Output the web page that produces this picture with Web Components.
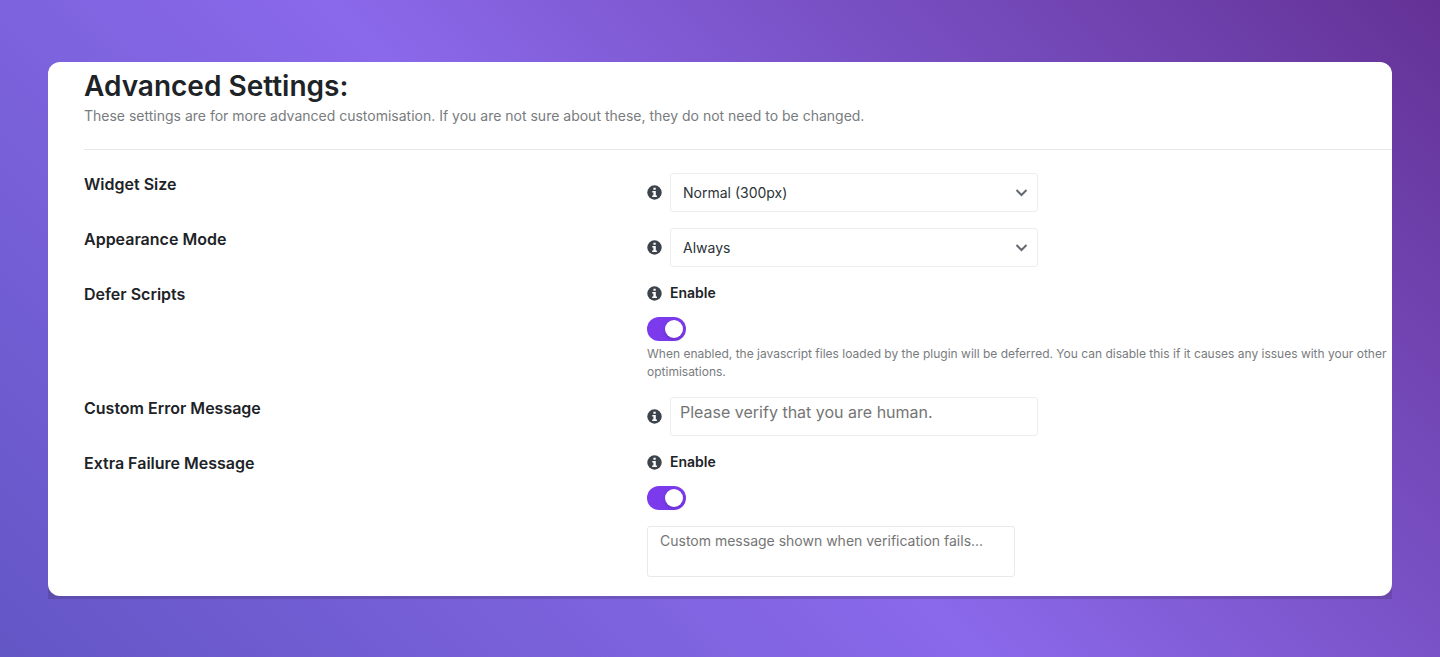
<!DOCTYPE html>
<html lang="en">
<head>
<meta charset="utf-8">
<meta name="viewport" content="width=device-width, initial-scale=1">
<title>Advanced Settings</title>
<style>
  body {
    margin: 0;
    min-height: 100vh;
    box-sizing: border-box;
    padding: 62px 48px 58px;
    font-family: Inter, "Liberation Sans", sans-serif;
    color: #1d2327;
    background: linear-gradient(45deg, #6356c5 0%, #8a69ea 47%, #643296 100%);
  }
</style>
</head>
<body>
<settings-panel heading="Advanced Settings:">
  <span slot="intro">These settings are for more advanced customisation. If you are not sure about these, they do not need to be changed.</span>
  <select-setting label="Widget Size" options="Normal (300px)|Flexible (100%)|Compact (150px)"></select-setting>
  <select-setting label="Appearance Mode" options="Always|Interaction Only"></select-setting>
  <toggle-setting label="Defer Scripts">
    <help-text>When enabled, the javascript files loaded by the plugin will be deferred. You can disable this if it causes any issues with your other optimisations.</help-text>
  </toggle-setting>
  <message-setting label="Custom Error Message" hint="Please verify that you are human."></message-setting>
  <toggle-setting label="Extra Failure Message">
    <message-box hint="Custom message shown when verification fails..." label="Extra failure message text"></message-box>
  </toggle-setting>
</settings-panel>

<script>
class SettingsPanel extends HTMLElement {
  connectedCallback() {
    this.attachShadow({ mode: 'open' }).innerHTML = `
      <style>
        :host { display: block; padding-bottom: 3px; background: linear-gradient(to top, rgba(64, 40, 96, 0.25) 16px, transparent 16px); }
        section { background: #fff; border-radius: 12px; padding: 6px 0 19px 36px; }
        h1 { margin: 0; font-size: 28px; line-height: 36px; font-weight: 600; }
        p { margin: 0; font-size: 14px; line-height: 24px; color: #787c7e; }
        hr { margin: 21px 0 23px; border: 0; border-top: 1px solid #e8e8e9; }
        .rows { display: flex; flex-direction: column; gap: 16px; }
      </style>
      <section>
        <h1></h1>
        <p><slot name="intro"></slot></p>
        <hr>
        <div class="rows"><slot></slot></div>
      </section>`;
    this.shadowRoot.querySelector('h1').textContent = this.getAttribute('heading');
  }
}

class InfoIcon extends HTMLElement {
  connectedCallback() {
    this.attachShadow({ mode: 'open' }).innerHTML = `
      <style>
        :host { display: block; flex: none; width: 15px; height: 15px; color: #3c434a; }
        svg { display: block; width: 100%; height: 100%; }
      </style>
      <svg viewBox="0 0 15 15" aria-hidden="true">
        <circle cx="7.5" cy="7.5" r="7.2" fill="currentColor"/>
        <path fill="#fff" d="M6.4 2.8h2.3v2H6.4zM5.3 6h3.5v4.4h1.1v1.5H5.2v-1.5h1.2V7.5H5.3z"/>
      </svg>`;
  }
}

const ROW_STYLE = `
  :host { display: grid; grid-template-columns: 43fr 57fr; column-gap: 1px; align-items: start; }
  .name { font-size: 16px; line-height: 22px; font-weight: 600; }
  .line { display: flex; align-items: center; gap: 8px; }
  .field { box-sizing: border-box; width: 368px; max-width: 100%; height: 39px; margin: 0;
    border: 1px solid #ededee; border-radius: 3px; background: #fff; color: #2c3338; font-family: inherit; }
`;

class SelectSetting extends HTMLElement {
  connectedCallback() {
    this.attachShadow({ mode: 'open' }).innerHTML = `
      <style>${ROW_STYLE}
        .pick { display: grid; align-items: center; }
        .pick > * { grid-area: 1 / 1; }
        select { appearance: none; padding: 0 32px 0 12px; font-size: 14px; }
        svg { justify-self: end; margin-right: 10px; width: 13px; height: 9px; pointer-events: none; }
      </style>
      <label class="name" for="control"></label>
      <div class="line">
        <info-icon></info-icon>
        <div class="pick">
          <select class="field" id="control"></select>
          <svg viewBox="0 0 13 9" fill="none" stroke="#646970" stroke-width="2" aria-hidden="true"><path d="M1.5 2l5 5 5-5"/></svg>
        </div>
      </div>`;
    this.shadowRoot.querySelector('.name').textContent = this.getAttribute('label');
    const select = this.shadowRoot.querySelector('select');
    for (const text of this.getAttribute('options').split('|')) select.add(new Option(text));
  }
}

class ToggleSetting extends HTMLElement {
  connectedCallback() {
    this.attachShadow({ mode: 'open' }).innerHTML = `
      <style>${ROW_STYLE}
        .line { height: 20px; }
        .line label { font-size: 14px; line-height: 20px; font-weight: 600; }
        input { appearance: none; display: block; box-sizing: border-box; width: 39px; height: 24px; margin: 14px 0 4px;
          padding: 3px; border-radius: 12px; background: #7c3aed; }
        input::before { content: ""; display: block; width: 18px; height: 18px; border-radius: 50%;
          background: #fff; box-shadow: 0 2px 4px rgba(0, 0, 0, 0.15); }
        input:checked::before { margin-left: 15px; }
        input:not(:checked) { background: #c3c4c7; }
      </style>
      <div class="name" id="name"></div>
      <div>
        <div class="line"><info-icon></info-icon><label for="control">Enable</label></div>
        <input type="checkbox" id="control" aria-describedby="name" checked>
        <slot></slot>
      </div>`;
    this.shadowRoot.querySelector('.name').textContent = this.getAttribute('label');
  }
}

class MessageSetting extends HTMLElement {
  connectedCallback() {
    this.attachShadow({ mode: 'open' }).innerHTML = `
      <style>${ROW_STYLE}
        textarea { display: block; resize: none; overflow: hidden; padding: 3px 9px; font-size: 16px; line-height: 22px; }
        textarea::placeholder { color: #757575; }
      </style>
      <label class="name" for="control"></label>
      <div class="line">
        <info-icon></info-icon>
        <textarea class="field" id="control" rows="1"></textarea>
      </div>`;
    this.shadowRoot.querySelector('.name').textContent = this.getAttribute('label');
    this.shadowRoot.querySelector('textarea').placeholder = this.getAttribute('hint');
  }
}

class HelpText extends HTMLElement {
  connectedCallback() {
    this.attachShadow({ mode: 'open' }).innerHTML = `
      <style>
        :host { display: block; font-size: 12px; line-height: 18px; color: #787c7e; }
      </style>
      <slot></slot>`;
  }
}

class MessageBox extends HTMLElement {
  connectedCallback() {
    this.attachShadow({ mode: 'open' }).innerHTML = `
      <style>
        :host { display: block; margin-top: 16px; }
        textarea { display: block; box-sizing: border-box; width: 368px; max-width: 100%; height: 51px; margin: 0;
          resize: none; overflow: hidden; padding: 3px 12px; border: 1px solid #e9e9ea; border-radius: 3px;
          background: #fff; font-family: inherit; font-size: 14px; line-height: 22px; }
        textarea::placeholder { color: #757575; }
      </style>
      <textarea></textarea>`;
    const box = this.shadowRoot.querySelector('textarea');
    box.placeholder = this.getAttribute('hint');
    box.setAttribute('aria-label', this.getAttribute('label'));
  }
}

customElements.define('info-icon', InfoIcon);
customElements.define('help-text', HelpText);
customElements.define('message-box', MessageBox);
customElements.define('select-setting', SelectSetting);
customElements.define('toggle-setting', ToggleSetting);
customElements.define('message-setting', MessageSetting);
customElements.define('settings-panel', SettingsPanel);
</script>
</body>
</html>
